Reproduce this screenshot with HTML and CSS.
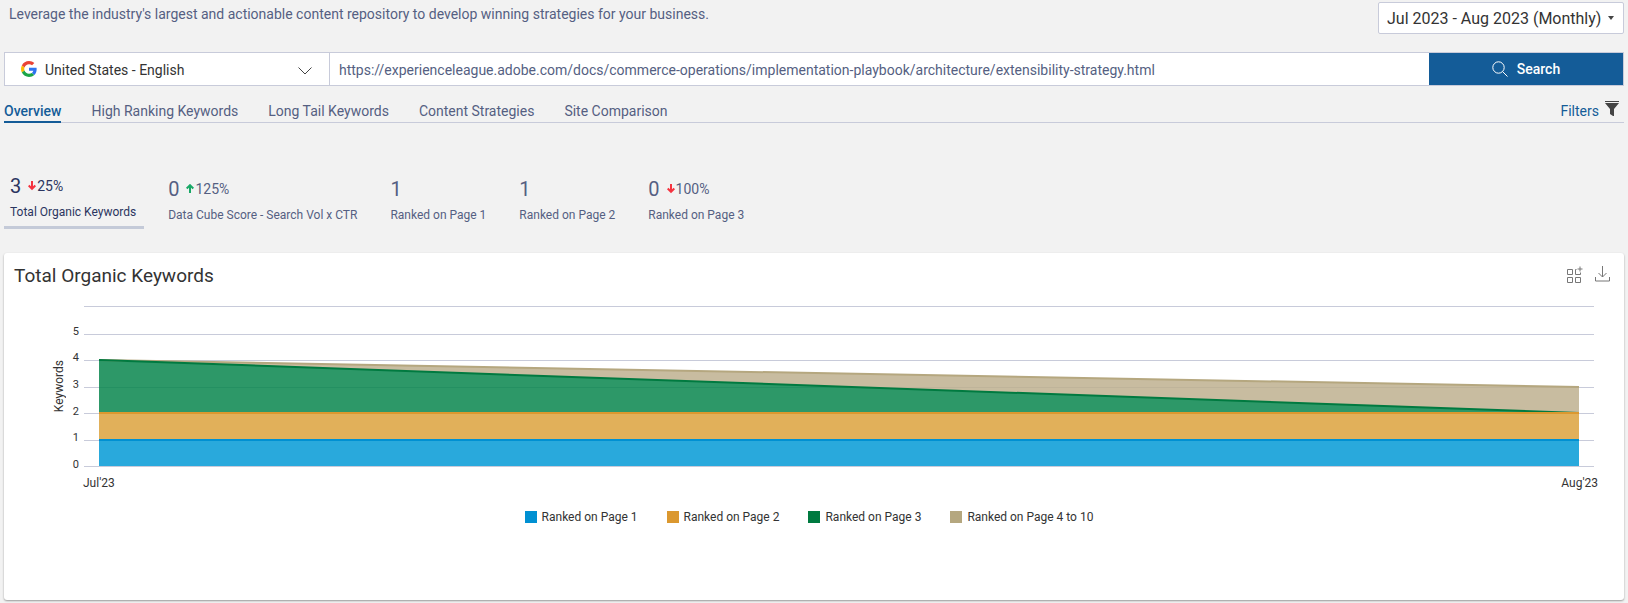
FILE: index.html
```html
<!DOCTYPE html>
<html lang="en">
<head>
<meta charset="utf-8">
<meta name="viewport" content="width=device-width, initial-scale=1">
<title>Total Organic Keywords</title>
<link rel="stylesheet" href="styles.css">
</head>
<body>
<header class="intro">
  <p class="tagline">Leverage the industry's largest and actionable content repository to develop winning strategies for your business.</p>
  <div class="period">
    <select class="period-select" aria-label="Period"><option>Jul 2023 - Aug 2023 (Monthly)</option></select>
    <svg class="period-caret" width="8" height="4" viewBox="0 0 8 4" aria-hidden="true"><path d="M1 0h6L4 4z" fill="#444"/></svg>
  </div>
</header>

<form class="search">
  <div class="engine">
    <svg class="engine-logo" width="16" height="16" viewBox="0 0 48 48" aria-hidden="true">
      <path fill="#EA4335" d="M24 9.5c3.54 0 6.71 1.22 9.21 3.6l6.85-6.85C35.9 2.38 30.47 0 24 0 14.62 0 6.51 5.38 2.56 13.22l7.98 6.19C12.43 13.72 17.74 9.5 24 9.5z"/>
      <path fill="#2F73F0" d="M46.98 24.55c0-1.57-.15-3.09-.38-4.55H24v9.02h12.94c-.58 2.96-2.26 5.48-4.78 7.18l7.73 6c4.51-4.18 7.09-10.36 7.09-17.65z"/>
      <path fill="#FBBC05" d="M10.53 28.59c-.48-1.45-.76-2.99-.76-4.59s.27-3.14.76-4.59l-7.98-6.19C.92 16.46 0 20.12 0 24c0 3.88.92 7.54 2.56 10.78l7.97-6.19z"/>
      <path fill="#1BA548" d="M24 48c6.48 0 11.93-2.13 15.89-5.81l-7.73-6c-2.15 1.45-4.92 2.3-8.16 2.3-6.26 0-11.57-4.22-13.47-9.91l-7.98 6.19C6.51 42.62 14.62 48 24 48z"/>
    </svg>
    <select class="engine-select" aria-label="Search engine"><option>United States - English</option></select>
    <svg class="engine-chevron" width="14" height="8" viewBox="0 0 14 8" aria-hidden="true"><path d="M.5.5 7 7 13.500.5" fill="none" stroke="#444"/></svg>
  </div>
  <input class="url" type="text" aria-label="URL" value="https://experienceleague.adobe.com/docs/commerce-operations/implementation-playbook/architecture/extensibility-strategy.html">
  <button class="search-button" type="button">
    <svg width="16" height="16" viewBox="0 0 16 16" fill="none" stroke="#fff" aria-hidden="true"><circle cx="6.500" cy="6.500" r="5.700"/><path d="m10.600 10.600 4.900 4.900"/></svg>
    Search
  </button>
</form>

<nav class="tabs">
  <a class="tab tab-active" href="#">Overview</a>
  <a class="tab" href="#">High Ranking Keywords</a>
  <a class="tab" href="#">Long Tail Keywords</a>
  <a class="tab" href="#">Content Strategies</a>
  <a class="tab" href="#">Site Comparison</a>
  <button class="filters" type="button">Filters
    <svg width="14" height="15" viewBox="0 0 14 15" fill="#444" aria-hidden="true"><path d="M0 0h14v1H0zM0 2h14L9 8v7H8l-3-2V8z"/></svg>
  </button>
</nav>

<section class="metrics">
  <button class="metric metric-active" type="button">
    <span class="metric-top"><span class="metric-value">3</span><svg class="down" width="8" height="10" viewBox="0 0 8 10" aria-hidden="true"><path d="M4 0v8M.700 4.500 4 7.800 7.300 4.500"/></svg><span class="metric-change">25%</span></span>
    <span class="metric-name">Total Organic Keywords</span>
  </button>
  <button class="metric" type="button">
    <span class="metric-top"><span class="metric-value">0</span><svg class="up" width="8" height="10" viewBox="0 0 8 10" aria-hidden="true"><path d="M4 9V1M.700 4.500 4 1.200 7.300 4.500"/></svg><span class="metric-change">125%</span></span>
    <span class="metric-name">Data Cube Score - Search Vol x CTR</span>
  </button>
  <button class="metric" type="button">
    <span class="metric-top"><span class="metric-value">1</span></span>
    <span class="metric-name">Ranked on Page 1</span>
  </button>
  <button class="metric" type="button">
    <span class="metric-top"><span class="metric-value">1</span></span>
    <span class="metric-name">Ranked on Page 2</span>
  </button>
  <button class="metric" type="button">
    <span class="metric-top"><span class="metric-value">0</span><svg class="down" width="8" height="10" viewBox="0 0 8 10" aria-hidden="true"><path d="M4 0v8M.700 4.500 4 7.800 7.300 4.500"/></svg><span class="metric-change">100%</span></span>
    <span class="metric-name">Ranked on Page 3</span>
  </button>
</section>

<main class="card">
  <div class="card-head">
    <h2 class="card-title">Total Organic Keywords</h2>
    <button class="icon-button" type="button" aria-label="Add to dashboard">
      <svg width="17" height="17" viewBox="0 0 17 17" fill="none" stroke="#777" aria-hidden="true"><path d="M1.500 3.500h5v5h-5zM1.500 11.500h5v5h-5zM9.500 11.500h5v5h-5zM10.500 3.500h-1v5h5v-2M14 .5v5M11.500 3h5"/></svg>
    </button>
    <button class="icon-button" type="button" aria-label="Download">
      <svg width="16" height="16" viewBox="0 0 16 16" fill="none" stroke="#777" aria-hidden="true"><path d="M7.500 0v11M3.500 7l4 4 4-4M.5 11v4h14v-4"/></svg>
    </button>
  </div>
  <figure class="chart">
    <span class="axis-title">Keywords</span>
    <div class="axis-values"><span>5</span><span>4</span><span>3</span><span>2</span><span>1</span><span>0</span></div>
    <div class="plot">
      <svg class="grid" viewBox="0 0 100 161" preserveAspectRatio="none" aria-hidden="true">
        <path d="M0 .5h100M0 28.500h100M0 54.500h100M0 81.500h100M0 107.500h100M0 134.500h100M0 160.500h100"/>
      </svg>
      <svg class="areas" viewBox="0 0 100 161" preserveAspectRatio="none" role="img" aria-label="Ranked keywords, July to August 2023">
        <path class="fill-4" d="M0 54 100 81V107z"/>
        <path class="fill-3" d="M0 54 100 107H0z"/>
        <path class="fill-2" d="M0 107h100v27H0z"/>
        <path class="fill-1" d="M0 134h100v26H0z"/>
        <path class="line-4" d="M0 54 100 81"/>
        <path class="line-3" d="M0 54 100 107"/>
        <path class="line-2" d="M0 107h100"/>
        <path class="line-1" d="M0 134h100"/>
      </svg>
    </div>
    <div class="axis-months"><span>Jul'23</span><span>Aug'23</span></div>
  </figure>
  <ul class="legend">
    <li><i class="swatch swatch-1"></i>Ranked on Page 1</li>
    <li><i class="swatch swatch-2"></i>Ranked on Page 2</li>
    <li><i class="swatch swatch-3"></i>Ranked on Page 3</li>
    <li><i class="swatch swatch-4"></i>Ranked on Page 4 to 10</li>
  </ul>
</main>
</body>
</html>
```
FILE: styles.css
```css
* { box-sizing: border-box; }

body {
  margin: 0;
  padding: 0 4px 3px;
  background: #f2f2f2;
  color: #555f82;
  font: 14px/20px Roboto, sans-serif;
}

button, input, select {
  margin: 0;
  padding: 0;
  border: 0;
  background: none;
  color: inherit;
  font: inherit;
  appearance: none;
}

svg { display: block; }

.intro {
  display: flex;
  justify-content: space-between;
  padding-top: 2px;
}
.tagline { margin: 2px 5px; }
.period { position: relative; }
.period-select {
  height: 32px;
  width: 246px;
  padding: 2px 8px 0;
  border: 1px solid #c8cbda;
  border-radius: 2px;
  background: #fff;
  color: #333;
  font-size: 16px;
}
.period-caret { position: absolute; right: 9px; top: 14px; pointer-events: none; }

.search {
  display: flex;
  height: 34px;
  margin-top: 18px;
  border: 1px solid #c8cbda;
  background: #fff;
}
.engine { position: relative; flex: 0 0 325px; border-right: 1px solid #c8cbda; }
.engine-select { width: 100%; height: 100%; padding: 2px 0 0 40px; color: #333; }
.engine-logo { position: absolute; left: 16px; top: 8px; pointer-events: none; }
.engine-chevron { position: absolute; right: 17px; top: 14px; pointer-events: none; }
.url { flex: 1; min-width: 0; padding: 2px 9px 0; }
.search-button {
  flex: 0 0 194px;
  display: flex;
  align-items: center;
  justify-content: center;
  gap: 9px;
  background: #145c98;
  color: #fff;
  font-weight: 500;
}

.tabs {
  display: flex;
  gap: 30px;
  margin-top: 15px;
  border-bottom: 1px solid #c8cbda;
}
.tab {
  height: 22px;
  margin-bottom: -1px;
  color: inherit;
  text-decoration: none;
  white-space: nowrap;
}
.tab-active { border-bottom: 2px solid #145c98; color: #145c98; font-weight: 500; }
.filters {
  display: flex;
  gap: 6px;
  margin-left: auto;
  padding-right: 5px;
  color: #145c98;
}

.metrics {
  display: flex;
  align-items: center;
  gap: 18px;
  margin-top: 51px;
}
.metric {
  display: grid;
  gap: 6px;
  padding: 0 9px 3px 6px;
  color: #555f82;
  text-align: left;
  white-space: nowrap;
}
.metric-active { padding: 0 8px 6px 6px; border-bottom: 3px solid #c4cad8; color: #2b3560; }
.metric-top { display: flex; align-items: center; height: 24px; }
.metric-value { margin-right: 7px; font-size: 20px; }
.metric-change { margin-left: 1px; }
.metric-name { font-size: 12px; line-height: 16px; }
.up, .down { fill: none; stroke: #19a866; stroke-width: 2; }
.down { stroke: #f5333f; }

.card {
  min-height: 347px;
  margin-top: 24px;
  padding: 10px 10px 0;
  border-radius: 3px;
  background: #fff;
  box-shadow: 0 1px 2px #999;
  color: #333;
}
.card-head { display: flex; align-items: flex-start; gap: 12px; height: 26px; padding-right: 3px; }
.card-title { flex: 1; margin: 0; font-size: 19px; font-weight: 400; line-height: 26px; }
.icon-button { padding-top: 3px; }

.chart {
  display: grid;
  grid-template-columns: 14px 13px 1fr;
  margin: 17px 20px 0 38px;
  font-size: 12px;
}
.axis-title { place-self: center; writing-mode: vertical-rl; transform: rotate(180deg); line-height: 14px; }
.axis-values {
  display: grid;
  grid-template-rows: repeat(6, 1fr);
  align-items: end;
  height: 160px;
  margin: 5px 0 -4px;
  text-align: right;
  font-size: 11px;
  line-height: 12px;
}
.plot { position: relative; height: 161px; margin-left: 5px; }
.grid { width: 100%; height: 100%; fill: none; stroke: #c8cbda; shape-rendering: crispEdges; }
.areas { position: absolute; left: 15px; top: 0; width: calc(100% - 30px); height: 100%; }
.areas path { vector-effect: non-scaling-stroke; }
.fill-1, .fill-2, .fill-3, .fill-4 { fill-opacity: .84; }
.fill-1 { fill: #0099d5; }
.fill-2 { fill: #dba13a; }
.fill-3 { fill: #05844b; }
.fill-4 { fill: #beaf8e; }
.line-1, .line-2, .line-3, .line-4 { fill: none; stroke-width: 2; }
.line-1 { stroke: #0090d2; }
.line-2 { stroke: #db982f; }
.line-3 { stroke: #007a40; }
.line-4 { stroke: #b5a77f; }
.axis-months {
  grid-column: 3;
  display: flex;
  justify-content: space-between;
  margin: 6px -4px 0 4px;
}

.legend {
  display: flex;
  justify-content: center;
  gap: 29px;
  margin: 14px 0 0;
  padding: 0 10px 0 0;
  font-size: 12px;
  list-style: none;
}
.legend li { display: flex; align-items: center; gap: 5px; }
.swatch { width: 12px; height: 12px; }
.swatch-1 { background: #0090d2; }
.swatch-2 { background: #db982f; }
.swatch-3 { background: #007a40; }
.swatch-4 { background: #b5a77f; }
```
